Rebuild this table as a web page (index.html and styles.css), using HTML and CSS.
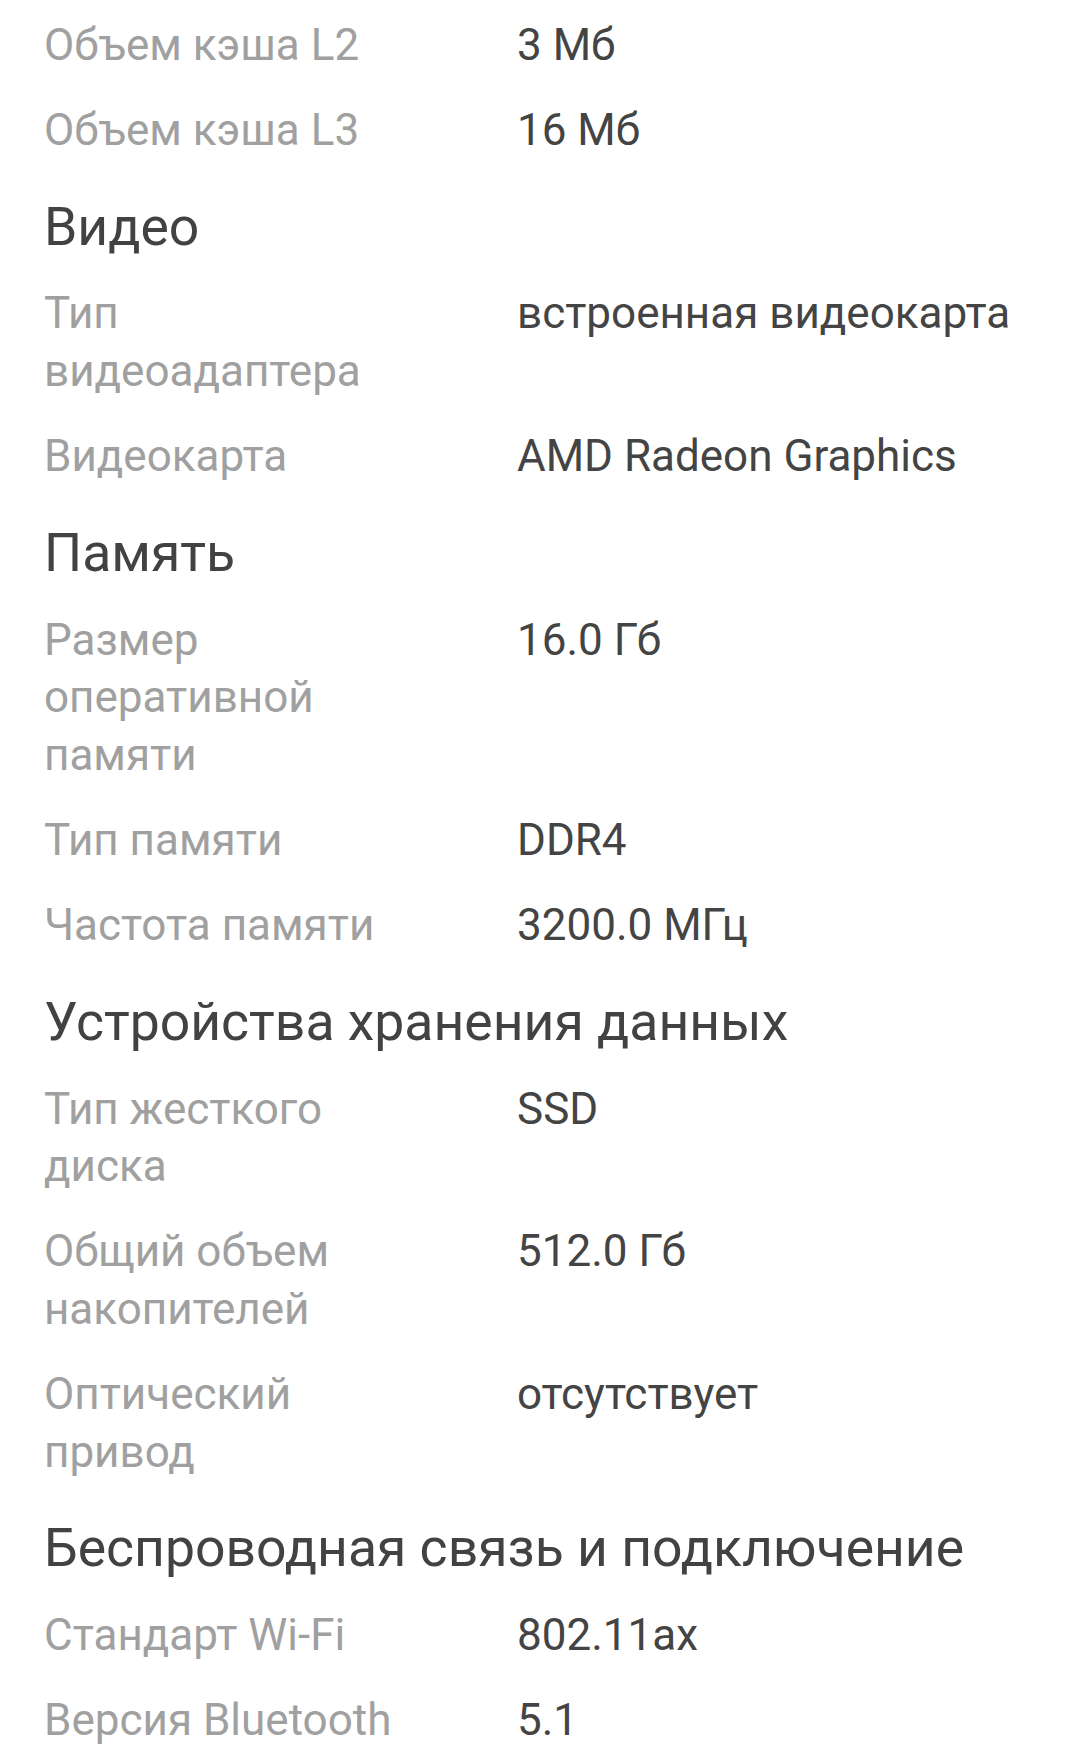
FILE: index.html
```html
<!DOCTYPE html>
<html lang="ru">
<head>
<meta charset="utf-8">
<title>Характеристики</title>
<link rel="stylesheet" href="styles.css">
</head>
<body>
<main class="specs">
  <div class="row"><div class="label">Объем кэша L2</div><div class="value">3 Мб</div></div>
  <div class="row"><div class="label">Объем кэша L3</div><div class="value">16 Мб</div></div>

  <h2 class="heading">Видео</h2>
  <div class="row"><div class="label">Тип видеоадаптера</div><div class="value">встроенная видеокарта</div></div>
  <div class="row"><div class="label">Видеокарта</div><div class="value">AMD Radeon Graphics</div></div>

  <h2 class="heading">Память</h2>
  <div class="row"><div class="label">Размер оперативной памяти</div><div class="value">16.0 Гб</div></div>
  <div class="row"><div class="label">Тип памяти</div><div class="value">DDR4</div></div>
  <div class="row"><div class="label">Частота памяти</div><div class="value">3200.0 МГц</div></div>

  <h2 class="heading">Устройства хранения данных</h2>
  <div class="row"><div class="label">Тип жесткого диска</div><div class="value">SSD</div></div>
  <div class="row"><div class="label">Общий объем накопителей</div><div class="value">512.0 Гб</div></div>
  <div class="row"><div class="label">Оптический привод</div><div class="value">отсутствует</div></div>

  <h2 class="heading">Беспроводная связь и подключение</h2>
  <div class="row"><div class="label">Стандарт Wi-Fi</div><div class="value">802.11ax</div></div>
  <div class="row"><div class="label">Версия Bluetooth</div><div class="value">5.1</div></div>
</main>
</body>
</html>
```

FILE: styles.css
```css
html, body {
  margin: 0;
  padding: 0;
  background: #ffffff;
}

body {
  font-family: Roboto, "Noto Sans", "Liberation Sans", sans-serif;
  -webkit-font-smoothing: antialiased;
}

.specs {
  display: flex;
  flex-direction: column;
  gap: 27.75px;
  padding: 16.5px 40px 40px 44px;
}

.row {
  display: grid;
  grid-template-columns: 380px 1fr;
  column-gap: 93px;
  font-size: 44px;
  line-height: 57.5px;
}

.label {
  color: #a0a0a0;
}

.value {
  color: #444444;
}

.heading {
  margin: 8.5px 0 0 0;
  font-size: 53.5px;
  line-height: 62px;
  font-weight: 400;
  color: #424242;
}
```
